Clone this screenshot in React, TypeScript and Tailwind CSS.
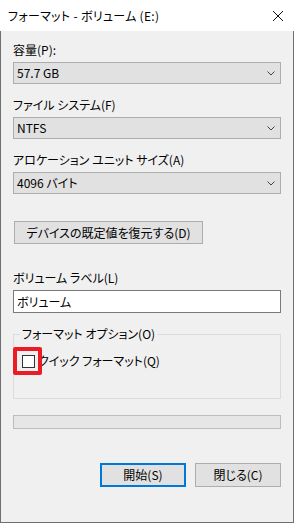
import React from "react";

const font = "[font-family:'Noto_Sans_CJK_JP','Noto_Sans',sans-serif] [font-feature-settings:'palt']";

const Chevron = () => (
  <svg width="8" height="5" viewBox="0 0 8 5" className="shrink-0">
    <path d="M0.5 0.5 L4 4 L7.5 0.5" fill="none" stroke="#444" strokeWidth="1" />
  </svg>
);

const Combo = ({ value }: { value: string }) => (
  <div className="mt-[4px] h-[22px] bg-[#e1e1e1] border border-[#adadad] flex items-center justify-between pl-[3px] pr-[5px]">
    <span>{value}</span>
    <Chevron />
  </div>
);

const Label = ({ text, className = "" }: { text: string; className?: string }) => (
  <div className={`h-[16px] leading-[16px] ${className}`}>{text}</div>
);

export default function App() {
  return (
    <div className={`w-[294px] h-[523px] flex flex-col bg-[#f0f0f0] text-[12px] text-black ${font}`}>
      {/* Title bar */}
      <div className="h-[31px] bg-white flex items-center justify-between pl-[8px] pr-[11px] shrink-0">
        <span className="leading-[16px] tracking-[0.3px]">フォーマット - ボリューム (E:)</span>
        <svg width="10" height="10" viewBox="0 0 10 10">
          <path d="M0 0 L10 10 M10 0 L0 10" stroke="#111" strokeWidth="1" />
        </svg>
      </div>

      {/* Body */}
      <div className="flex-1 flex flex-col border-x border-b border-[#6f6f6f] px-[12px] pt-[11px]">
        <Label text="容量(P):" />
        <Combo value="57.7 GB" />

        <Label text="ファイル システム(F)" className="mt-[13px]" />
        <Combo value="NTFS" />

        <Label text="アロケーション ユニット サイズ(A)" className="mt-[13px]" />
        <Combo value="4096 バイト" />

        <button className="mt-[27px] ml-[1px] w-[189px] h-[23px] bg-[#e1e1e1] border border-[#adadad] flex items-center justify-center leading-[16px]">
          デバイスの既定値を復元する(D)
        </button>

        <Label text="ボリューム ラベル(L)" className="mt-[26px]" />
        <div className="mt-[4px] h-[23px] bg-white border border-[#7a7a7a] flex items-center pl-[3px]">
          ボリューム
        </div>

        <fieldset className="mt-[13px] h-[73px] border border-[#dcdcdc] px-[8px]">
          <legend className="ml-[-2px] px-[2px] leading-[16px]">フォーマット オプション(O)</legend>
          <div className="mt-[11px] flex items-center">
            <span className="relative w-[13px] h-[13px] bg-white border border-[#333] shrink-0">
              <span className="absolute left-[-10px] top-[-9px] w-[29px] h-[28px] border-4 border-[#ec1c24] rounded-[2px] z-10" />
            </span>
            <span className="ml-[3px] leading-[16px]">クイック フォーマット(Q)</span>
          </div>
        </fieldset>

        <div className="mt-[16px] h-[14px] bg-[#e6e6e6] border border-[#bcbcbc]" />

        <div className="mt-[34px] flex justify-end gap-[9px]">
          <button className="w-[86px] h-[24px] bg-[#e1e1e1] border-2 border-[#0078d7] flex items-center justify-center leading-[16px]">
            開始(S)
          </button>
          <button className="w-[86px] h-[24px] bg-[#e1e1e1] border border-[#adadad] flex items-center justify-center leading-[16px]">
            閉じる(C)
          </button>
        </div>
      </div>
    </div>
  );
}
